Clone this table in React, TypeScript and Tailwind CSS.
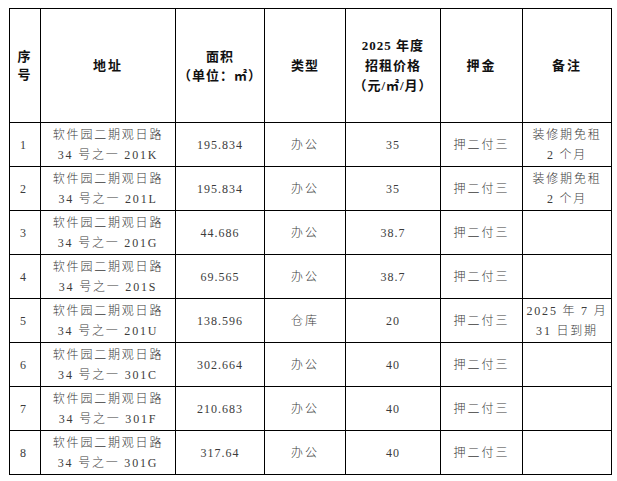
import React from 'react'

type Row = {
  no: string
  addr: string
  area: string
  kind: string
  price: string
  deposit: string
  note?: [string, string]
}

const rows: Row[] = [
  { no: '1', addr: '201K', area: '195.834', kind: '办公', price: '35', deposit: '押二付三', note: ['装修期免租', '2 个月'] },
  { no: '2', addr: '201L', area: '195.834', kind: '办公', price: '35', deposit: '押二付三', note: ['装修期免租', '2 个月'] },
  { no: '3', addr: '201G', area: '44.686', kind: '办公', price: '38.7', deposit: '押二付三' },
  { no: '4', addr: '201S', area: '69.565', kind: '办公', price: '38.7', deposit: '押二付三' },
  { no: '5', addr: '201U', area: '138.596', kind: '仓库', price: '20', deposit: '押二付三', note: ['2025 年 7 月', '31 日到期'] },
  { no: '6', addr: '301C', area: '302.664', kind: '办公', price: '40', deposit: '押二付三' },
  { no: '7', addr: '301F', area: '210.683', kind: '办公', price: '40', deposit: '押二付三' },
  { no: '8', addr: '301G', area: '317.64', kind: '办公', price: '40', deposit: '押二付三' },
]

const cols = 'grid-cols-[31px_135px_89px_81px_95px_82px_89px]'
const cell = 'border-r border-b border-black flex flex-col items-center justify-center text-center'
const head = `${cell} h-[114px] text-[13px] font-bold text-[#111]`
const body = `${cell} h-[44px] text-[12px] font-light text-[#3c3c3c]`

export default function App() {
  return (
    <div className="w-[617px] h-[481px] bg-white pt-[8px] pl-[9px] font-['Liberation_Serif','Noto_Sans_CJK_SC',serif]">
      <div className={`grid ${cols} w-[603px] border-l border-t border-black`}>
        {/* header */}
        <div className={`${head} leading-[18px] pr-[2px]`}>
          <span>序</span>
          <span>号</span>
        </div>
        <div className={`${head} tracking-[2px]`}>地址</div>
        <div className={`${head} leading-[19px] tracking-[1px]`}>
          <span>面积</span>
          <span>（单位：㎡）</span>
        </div>
        <div className={`${head} tracking-[1px]`}>类型</div>
        <div className={`${head} leading-[20px] tracking-[1px]`}>
          <span>2025 年度</span>
          <span>招租价格</span>
          <span>（元/㎡/月）</span>
        </div>
        <div className={`${head} tracking-[2px]`}>押金</div>
        <div className={`${head} tracking-[2px]`}>备注</div>

        {rows.map(r => (
          <React.Fragment key={r.no}>
            <div className={`${body} pr-[4px]`}>{r.no}</div>
            <div className={`${body} leading-[20px] tracking-[1.8px]`}>
              <span>软件园二期观日路</span>
              <span>34 号之一 {r.addr}</span>
            </div>
            <div className={`${body} tracking-[1px]`}>{r.area}</div>
            <div className={`${body} tracking-[2px]`}>{r.kind}</div>
            <div className={`${body} tracking-[1px]`}>{r.price}</div>
            <div className={`${body} tracking-[2px]`}>{r.deposit}</div>
            <div className={`${body} leading-[20px] tracking-[1.8px]`}>
              {r.note && (
                <>
                  <span>{r.note[0]}</span>
                  <span>{r.note[1]}</span>
                </>
              )}
            </div>
          </React.Fragment>
        ))}
      </div>
    </div>
  )
}
